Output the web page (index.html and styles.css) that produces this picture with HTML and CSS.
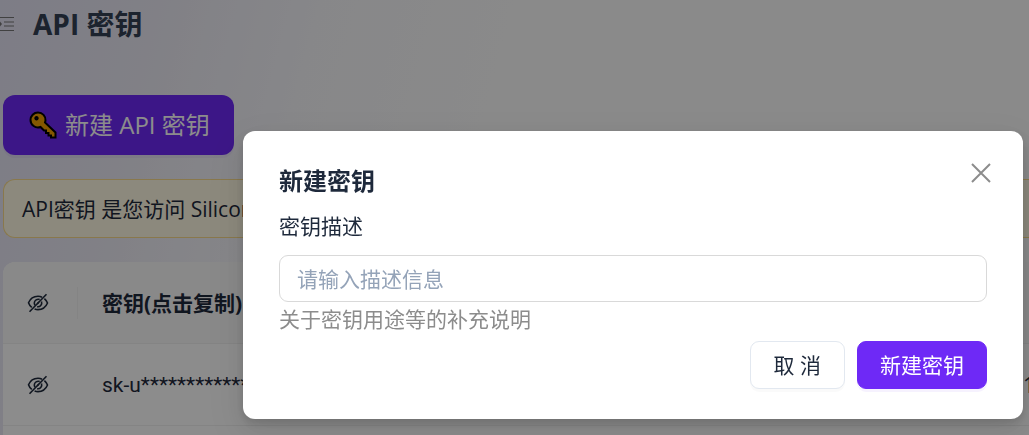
FILE: index.html
```html
<!DOCTYPE html>
<html lang="zh-CN">
<head>
    <meta charset="UTF-8">
    <title>API 密钥</title>
    <link rel="stylesheet" href="styles.css">
</head>
<body>
    <svg class="sprite" aria-hidden="true">
        <symbol id="icon-eye-off" viewBox="0 0 22 22">
            <path d="M15 5.200C13.800 4.500 12.500 4.200 11 4.200C6.500 4.200 3 7 1.500 10.700C2.200 12.700 3.300 14.200 4.800 15.400M7.600 17C8.700 17.400 9.800 17.600 11 17.600C15.500 17.600 19 14.700 20.500 11C19.900 9.400 18.800 8 17.400 6.700"/>
            <path d="M12.700 7.500C10.300 6.600 7.300 8.300 7.300 11.100C7.300 12 7.600 12.700 8.100 13.200M14.500 9.500C15.500 12.600 13 15.300 10.100 14.700M10.200 11.800L11.900 10.200"/>
            <path d="M2.500 19.700L19.500 2.300"/>
        </symbol>
    </svg>

    <div class="page">
        <header class="page-header">
            <svg class="menu-icon" viewBox="0 0 14 16" aria-hidden="true">
                <path d="M0 1.500H14M4 6H14M4 10H14M0 14.500H14"/>
                <path class="menu-arrow" d="M0 5.500L2 8L0 10.500Z"/>
            </svg>
            <h1>API 密钥</h1>
        </header>

        <main class="content">
            <button class="btn-create" type="button">
                <svg class="key-icon" viewBox="0 0 28 28" aria-hidden="true">
                    <path fill-rule="evenodd" d="M9 1.500C13.500 1.500 16.800 5 16.500 9.500L16 11.500L26.500 21.500V26.500H22V24.500H19.500V22H17V19.500H15L11.500 16C6.500 17.800 1.500 14 1.500 9C1.500 4.800 4.800 1.500 9 1.500ZM7.500 6A1.200 1.200 0 1 0 7.500 8.400A1.200 1.200 0 1 0 7.500 6Z"/>
                </svg>
                <span>新建 API 密钥</span>
            </button>

            <div class="notice">API密钥 是您访问 Silicon</div>

            <div class="table-card">
                <table class="key-table">
                    <thead>
                        <tr>
                            <th class="col-eye"><svg class="eye-icon"><use href="#icon-eye-off"/></svg></th>
                            <th>密钥(点击复制)</th>
                            <th class="col-date"></th>
                        </tr>
                    </thead>
                    <tbody>
                        <tr>
                            <td class="col-eye"><svg class="eye-icon"><use href="#icon-eye-off"/></svg></td>
                            <td class="key-value">sk-u****************</td>
                            <td class="col-date">1</td>
                        </tr>
                    </tbody>
                </table>
            </div>
        </main>
    </div>

    <div class="mask">
        <form class="dialog" role="dialog" aria-labelledby="dialog-title">
            <div class="dialog-header">
                <h2 id="dialog-title">新建密钥</h2>
                <button class="btn-close" type="button" aria-label="关闭">
                    <svg viewBox="0 0 20 20"><path d="M1 1L19 19M19 1L1 19"/></svg>
                </button>
            </div>
            <label for="key-desc">密钥描述</label>
            <input id="key-desc" type="text" placeholder="请输入描述信息">
            <p class="hint">关于密钥用途等的补充说明</p>
            <div class="dialog-footer">
                <button class="btn" type="button">取 消</button>
                <button class="btn btn-primary" type="button">新建密钥</button>
            </div>
        </form>
    </div>
</body>
</html>
```
FILE: styles.css
```css
* {
    margin: 0;
    padding: 0;
    box-sizing: border-box;
}
body {
    overflow: hidden;
    font-family: "Open Sans", "Noto Sans CJK SC", sans-serif;
    font-size: 21px;
    line-height: 32px;
    color: #1e293b;
}
button, input {
    font: inherit;
    color: inherit;
}
button {
    cursor: pointer;
}
.sprite {
    position: absolute;
    width: 0;
    height: 0;
}

/* page behind the dialog */
.page {
    display: flex;
    flex-direction: column;
    height: 100vh;
    background: linear-gradient(105deg, #e4e3f4 0%, #ebeaf4 14%, #f6f6fa 28%, #fbfbfb 45%, #fbfbfb 100%);
}
.page-header {
    display: flex;
    align-items: center;
    gap: 19px;
    height: 47px;
}
.page-header h1 {
    font-size: 28px;
    line-height: 40px;
    color: #334155;
}
.menu-icon {
    width: 14px;
    height: 16px;
    fill: none;
    stroke: #777;
    stroke-width: 1;
}
.menu-icon .menu-arrow {
    fill: #777;
    stroke: none;
}
.content {
    display: flex;
    flex-direction: column;
    flex: 1;
    padding: 48px 0 0 3px;
}
.btn-create {
    display: flex;
    align-items: center;
    align-self: flex-start;
    gap: 8px;
    height: 60px;
    padding: 0 24px 0 26px;
    border: none;
    border-radius: 12px;
    background: #6e29f6;
    box-shadow: 0 3px 0 rgba(110, 41, 246, 0.06);
    color: #fff;
    font-size: 24px;
}
.key-icon {
    width: 28px;
    height: 28px;
    fill: #f0a000;
    stroke: #000;
    stroke-width: 2;
}
.notice {
    margin-top: 24px;
    padding: 13px 18px 12px;
    border: 1px solid #fadb8a;
    border-right: none;
    border-radius: 12px 0 0 12px;
    background: #fffae3;
    white-space: nowrap;
}
.table-card {
    flex: 1;
    margin-top: 24px;
    border-radius: 12px 0 0 0;
    background: #fff;
}
.key-table {
    width: 100%;
    border-collapse: separate;
    border-spacing: 0;
    table-layout: fixed;
}
.key-table th, .key-table td {
    height: 82px;
    padding: 0 24px;
    border-bottom: 1px solid #f0f0f0;
    text-align: left;
    white-space: nowrap;
}
.key-table th {
    background: #fafafa;
}
.key-table .col-eye {
    width: 75px;
}
.key-table th.col-eye {
    border-radius: 12px 0 0 0;
    background: linear-gradient(#f0f0f0, #f0f0f0) right center / 1px 32px no-repeat #fafafa;
}
.key-table .col-date {
    width: 6px;
    padding: 0;
}
.key-table .key-value {
    font-family: Roboto, "Noto Sans CJK SC", sans-serif;
}
.eye-icon {
    display: block;
    width: 22px;
    height: 22px;
    fill: none;
    stroke: #1e293b;
    stroke-width: 1.6;
}

/* dialog */
.mask {
    position: fixed;
    inset: 0;
    display: flex;
    justify-content: flex-end;
    align-items: flex-start;
    padding: 131px 6px 0 243px;
    background: rgba(0, 0, 0, 0.45);
}
.dialog {
    display: flex;
    flex-direction: column;
    flex: 1;
    padding: 30px 36px;
    border-radius: 12px;
    background: #fff;
    box-shadow: 0 9px 24px rgba(0, 0, 0, 0.08), 0 4px 9px rgba(0, 0, 0, 0.12), 0 14px 42px 12px rgba(0, 0, 0, 0.05);
}
.dialog-header {
    display: flex;
    justify-content: space-between;
    height: 49px;
}
.dialog-header h2 {
    font-size: 24px;
    line-height: 40px;
}
.btn-close {
    width: 32px;
    height: 24px;
    margin-right: -10px;
    border: none;
    background: none;
}
.btn-close svg {
    display: block;
    width: 20px;
    height: 20px;
    margin: 2px auto;
    fill: none;
    stroke: #8c8c8c;
    stroke-width: 2;
}
.dialog input {
    height: 47px;
    margin-top: 13px;
    padding: 0 17px;
    border: 1px solid #d9d9d9;
    border-radius: 9px;
    outline: none;
}
.dialog input::placeholder {
    color: #94a3b8;
    opacity: 1;
}
.hint {
    margin-top: 1px;
    color: #8c8c8c;
}
.dialog-footer {
    display: flex;
    justify-content: flex-end;
    gap: 12px;
    margin-top: 6px;
}
.btn {
    height: 48px;
    padding: 0 23px;
    border: 1px solid #e2e8f0;
    border-radius: 9px;
    background: #fff;
    box-shadow: 0 3px 0 rgba(0, 0, 0, 0.02);
}
.btn-primary {
    padding: 0 22px;
    border-color: #6e29f6;
    background: #6e29f6;
    box-shadow: 0 3px 0 rgba(110, 41, 246, 0.06);
    color: #fff;
}
```
